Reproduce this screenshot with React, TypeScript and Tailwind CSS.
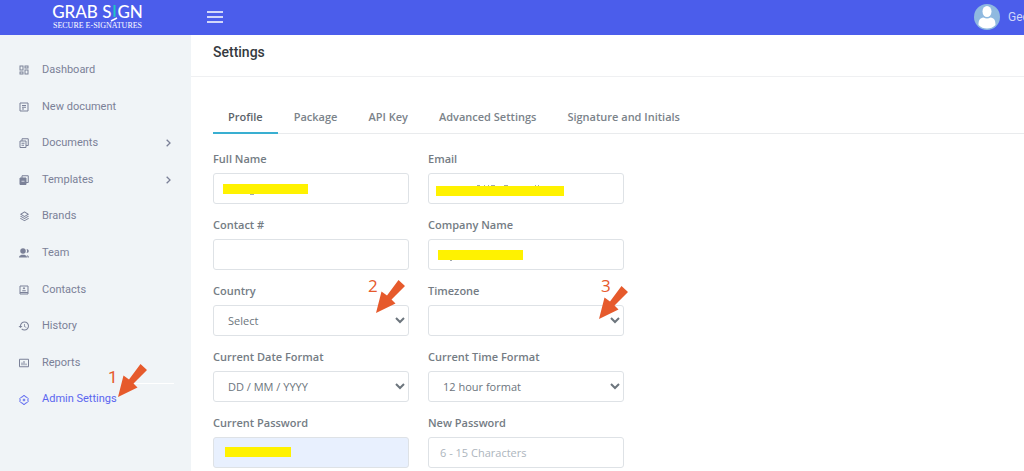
import type { ReactNode } from "react";
import { useState } from "react";
import { MdHistory, MdOutlineDashboard } from "react-icons/md";
import { RiStackLine } from "react-icons/ri";
import { BiChevronRight } from "react-icons/bi";

type NavItem = {
  label: string;
  icon: ReactNode;
  children?: boolean;
  active?: boolean;
};

function LineIcon({ children }: { children: ReactNode }) {
  return (
    <svg
      viewBox="0 0 20 20"
      className="size-[10px]"
      fill="none"
      stroke="currentColor"
      strokeWidth="2"
    >
      {children}
    </svg>
  );
}

const navItems: NavItem[] = [
  { label: "Dashboard", icon: <MdOutlineDashboard className="size-3" /> },
  {
    label: "New document",
    icon: (
      <LineIcon>
        <path d="M2 2h16v16H2zM6 7h8M6 10.5h8M6 14h4" />
      </LineIcon>
    ),
  },
  {
    label: "Documents",
    icon: (
      <LineIcon>
        <path d="M2 6h12v13H2zM6 6V1.5h12.5V15H14M5 10.5h6M5 14.5h5" />
      </LineIcon>
    ),
    children: true,
  },
  {
    label: "Templates",
    icon: (
      <LineIcon>
        <path d="M2 6h12v13H2z" fill="currentColor" />
        <path d="M6 6V1.5h12.5V15H14" />
        <path d="M5 12.5h6" stroke="#f0f4f7" strokeWidth="1.5" />
      </LineIcon>
    ),
    children: true,
  },
  { label: "Brands", icon: <RiStackLine className="size-[11px]" /> },
  {
    label: "Team",
    icon: (
      <LineIcon>
        <g fill="currentColor" stroke="none">
          <circle cx="8" cy="6" r="5.5" />
          <path d="M0 19c0-4 3-5.500 8-5.500s8 1.500 8 5.500zM15 2c3 0 4.500 2 4.500 4S18 10 15 10c1.500-2.500 1.500-5.500 0-8zM17 19c0-2-.5-3.500-1.500-4.500 3 .3 4.500 2 4.500 4.500z" />
        </g>
      </LineIcon>
    ),
  },
  {
    label: "Contacts",
    icon: (
      <LineIcon>
        <path d="M2 2h16v16H2zM2 15h16" />
        <circle cx="10" cy="6.5" r="1.2" fill="currentColor" />
        <path d="M6.5 11.5h7" />
      </LineIcon>
    ),
  },
  { label: "History", icon: <MdHistory className="size-3" /> },
  {
    label: "Reports",
    icon: (
      <LineIcon>
        <path d="M1 2.5h18v15H1zM6 14.5V9M10 14.5V6M14 14.5V11" />
      </LineIcon>
    ),
  },
  {
    label: "Admin Settings",
    icon: (
      <LineIcon>
        <path d="M8 1.500h4l1 2.500 3 .5 2.500 3L17.500 10l1 2.500-2.500 3-3 .5-1 2.500H8L7 16l-3-.5-2.500-3 1-2.500-1-2.500L4 4.500 7 4z" />
        <circle cx="10" cy="10" r="1.8" />
      </LineIcon>
    ),
    active: true,
  },
];

const tabs = [
  "Profile",
  "Package",
  "API Key",
  "Advanced Settings",
  "Signature and Initials",
];

const inputClass =
  "block h-[31px] w-full rounded-[3px] border border-[#dee2e6] bg-white px-[11px] text-[11px] text-[#6c757d] placeholder:text-[#adb5bd] outline-none";
const selectClass =
  "block h-[31px] w-full rounded-[3px] border border-[#dee2e6] bg-white pl-[10px] text-[11px] text-[#6c757d] outline-none";

function Arrow() {
  return (
    <svg viewBox="0 0 29 33" className="h-[33px] w-[29px]" fill="#e65a2c">
      <path d="M0 33L5.5 11.5L11 15.5L22.5 0L29 6L15.5 19.5L19.5 23.5Z" />
    </svg>
  );
}

function Logo() {
  return (
    <a href="#" className="flex flex-col items-center text-white">
      <span className="flex items-start font-['Lato'] text-[17px] leading-5 font-medium">
        GRAB S
        <svg viewBox="0 0 8 20" className="-mx-px h-5 w-2" fill="none">
          <path d="M4.5 3v12" stroke="#1fc8c0" strokeWidth="2" />
          <path d="M1 19L7 16" stroke="#fff" strokeWidth="1.5" />
        </svg>
        GN
      </span>
      <span className="font-['Liberation_Serif'] text-[8px] leading-2">
        SECURE E-SIGNATURES
      </span>
    </a>
  );
}

function Field({
  id,
  label,
  children,
}: {
  id: string;
  label: string;
  children: ReactNode;
}) {
  return (
    <div className="relative">
      <label
        htmlFor={id}
        className="mb-1.5 block text-[11px] leading-4 font-semibold text-[#747c84]"
      >
        {label}
      </label>
      {children}
    </div>
  );
}

export default function App() {
  const [activeTab, setActiveTab] = useState("Profile");

  return (
    <div className="h-screen overflow-hidden bg-white font-['Open_Sans',sans-serif]">
      <header className="flex h-[35px] items-center bg-[#4b5deb]">
        <div className="flex w-[191px] shrink-0 justify-center pb-1 pl-1">
          <Logo />
        </div>
        <button aria-label="Toggle menu" className="ml-4 pb-0.5 text-white">
          <svg viewBox="0 0 16 12" className="h-3 w-4" stroke="currentColor">
            <path d="M0 1h16M0 6h16M0 11h16" strokeWidth="1.5" />
          </svg>
        </button>
        <div className="ml-auto flex shrink-0 items-center gap-2 pb-0.5">
          <svg viewBox="0 0 26 26" className="size-[26px]">
            <circle cx="13" cy="13" r="13" fill="#8fb9e0" />
            <ellipse cx="13" cy="7.5" rx="4.5" ry="5.5" fill="#fff" />
            <path
              d="M4.5 21c0-5 1.500-7 5-7.500q3.500 2 7 0c3.500.5 5 2.500 5 7.500q-3.500 3.500-8.500 3.500T4.500 21z"
              fill="#fff"
            />
          </svg>
          <span className="w-4 font-['Roboto'] text-xs whitespace-nowrap text-[#d0d5fa]">
            Geo
          </span>
        </div>
      </header>

      <div className="flex h-full">
        <aside className="w-[191px] shrink-0 bg-[#f0f4f7] pt-[17px]">
          <nav className="grid h-[366px] grid-rows-10 font-['Roboto'] text-[11px] text-[#7b8198]">
            {navItems.map((item) => (
              <a
                key={item.label}
                href="#"
                className={`relative flex items-center pr-[15px] pl-[18px] ${
                  item.active ? "text-[#5a66f0]" : ""
                }`}
              >
                <span className="mr-3 flex w-3 justify-center">
                  {item.icon}
                </span>
                {item.label}
                {item.children && <BiChevronRight className="ml-auto size-4" />}
                {item.active && (
                  <>
                    <span className="absolute top-0.5 left-[132px] h-px w-[42px] bg-white" />
                    <span className="absolute -top-[17px] left-[118px]">
                      <Arrow />
                    </span>
                    <span className="absolute -top-3.5 left-[108px] font-['Roboto'] text-[17px] leading-5 text-[#e65a2c]">
                      1
                    </span>
                  </>
                )}
              </a>
            ))}
          </nav>
        </aside>

        <main className="min-w-0 flex-1">
          <div className="h-[42px] border-b border-[#eff0f2] pt-[7px] pl-[22px]">
            <h1 className="font-['Roboto'] text-sm font-medium text-[#343a40]">
              Settings
            </h1>
          </div>

          <div className="pt-[25px] pl-[22px]">
            <div
              role="tablist"
              className="flex gap-px border-b border-[#e9ebed] text-[11px] font-semibold text-[#7b838a]"
            >
              {tabs.map((tab) => (
                <button
                  key={tab}
                  role="tab"
                  aria-selected={activeTab === tab}
                  onClick={() => setActiveTab(tab)}
                  className={`-mb-px h-8 border-b-2 px-[15px] whitespace-nowrap ${
                    activeTab === tab
                      ? "border-[#39afd1] text-[#5c636a]"
                      : "border-transparent"
                  }`}
                >
                  {tab}
                </button>
              ))}
            </div>

            <form className="mt-[17px] grid max-w-[411px] grid-cols-2 gap-x-[19px] gap-y-[13px]">
              <Field id="full-name" label="Full Name">
                <input id="full-name" type="text" className={inputClass} />
                <svg
                  viewBox="0 0 85 12"
                  className="absolute top-[33px] left-[10px] h-3 w-[85px]"
                >
                  <path d="M0 0h85v10H0z" fill="#fff200" />
                  <path d="M27 10.500h4" stroke="#a3a9ae" />
                </svg>
              </Field>
              <Field id="email" label="Email">
                <input id="email" type="email" className={inputClass} />
                <svg
                  viewBox="0 0 128 12"
                  className="absolute top-[33px] left-2 h-3 w-32"
                >
                  <path
                    d="M41 1.500h3M48 1.500h1M52 1.500h1M55 1.500h4M68 1.500h4M99 1.500h1M102 1.500h1"
                    stroke="#a3a9ae"
                  />
                  <path d="M0 2h128v10H0z" fill="#fff200" />
                </svg>
              </Field>

              <Field id="contact" label="Contact #">
                <input id="contact" type="tel" className={inputClass} />
              </Field>
              <Field id="company" label="Company Name">
                <input id="company" type="text" className={inputClass} />
                <svg
                  viewBox="0 0 85 12"
                  className="absolute top-[33px] left-[10px] h-3 w-[85px]"
                >
                  <path d="M0 0h85v10H0z" fill="#fff200" />
                  <path d="M12 10.500h2" stroke="#a3a9ae" />
                </svg>
              </Field>

              <Field id="country" label="Country">
                <select id="country" className={selectClass}>
                  <option>Select</option>
                </select>
                <span className="absolute -top-[3px] left-[163px]">
                  <Arrow />
                </span>
                <span className="absolute -top-[7px] left-[155px] text-[17px] leading-5 text-[#e65a2c]">
                  2
                </span>
              </Field>
              <Field id="timezone" label="Timezone">
                <select id="timezone" className={selectClass}>
                  <option></option>
                </select>
                <span className="absolute top-[3px] left-[171px]">
                  <Arrow />
                </span>
                <span className="absolute -top-[7px] left-[173px] text-[17px] leading-5 text-[#e65a2c]">
                  3
                </span>
              </Field>

              <Field id="date-format" label="Current Date Format">
                <select id="date-format" className={selectClass}>
                  <option>DD / MM / YYYY</option>
                </select>
              </Field>
              <Field id="time-format" label="Current Time Format">
                <select id="time-format" className={selectClass}>
                  <option>12 hour format</option>
                </select>
              </Field>

              <Field id="current-password" label="Current Password">
                <input
                  id="current-password"
                  type="password"
                  className="block h-[31px] w-full rounded-[3px] border border-[#dee2e6] bg-[#e8f0fe] px-[11px] text-[11px] outline-none"
                />
                <span className="absolute top-8 left-3 h-[10px] w-[66px] bg-[#fff200]" />
              </Field>
              <Field id="new-password" label="New Password">
                <input
                  id="new-password"
                  type="password"
                  placeholder="6 - 15 Characters"
                  className={inputClass}
                />
              </Field>
            </form>
          </div>
        </main>
      </div>
    </div>
  );
}
